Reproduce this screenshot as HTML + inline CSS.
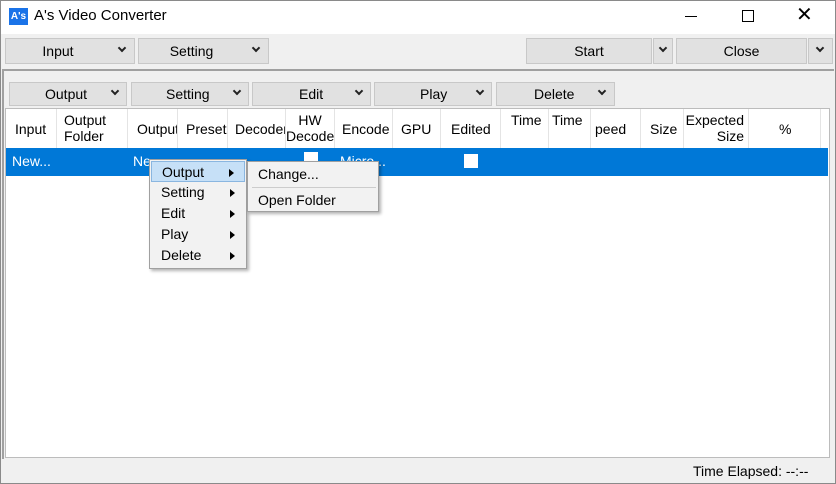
<!DOCTYPE html>
<html><head><style>
*{box-sizing:border-box;margin:0;padding:0}
body{width:836px;height:484px;overflow:hidden;background:#f0f0f0;font-family:"Segoe UI","Liberation Sans",sans-serif;font-size:14px;color:#000;position:relative}
.a{position:absolute}
.btn{position:absolute;background:#e1e1e1;border:1px solid #c8c8c8;display:flex;align-items:center;justify-content:center}
.chev{position:absolute;width:6px;height:6px;border-right:2px solid #222;border-bottom:2px solid #222;transform:rotate(45deg)}
.col{position:absolute;top:0;height:40px;border-right:1px solid #e4e4e4;font-size:14px;line-height:16px}
.mi{position:absolute;left:1px;width:94px;height:21px;padding-left:10px;line-height:21px}
.tri{position:absolute;right:10px;top:7px;width:0;height:0;border-left:5px solid #000;border-top:4px solid transparent;border-bottom:4px solid transparent}
</style></head><body>
<div class="a" style="left:0;top:0;width:836px;height:484px;border:1px solid #8a8a8a"></div>
<div class="a" style="left:1px;top:1px;width:834px;height:33px;background:#fff"></div>
<div class="a" style="left:9px;top:8px;width:19px;height:17px;background:#1a73e8;color:#fff;font-size:10px;font-weight:bold;line-height:17px;text-align:center">A's</div>
<div class="a" style="left:34px;top:7px;font-size:15px">A's Video Converter</div>
<div class="a" style="left:685px;top:16px;width:12px;height:1px;background:#000"></div>
<div class="a" style="left:742px;top:10px;width:12px;height:12px;border:1px solid #000"></div>
<div class="a" style="left:796px;top:5px;font-size:20px;line-height:20px">✕</div>

<div class="btn" style="left:5px;top:38px;width:106px;height:26px">Input</div><div class="btn" style="left:110px;top:38px;width:25px;height:26px;border-left:none"></div><div class="chev" style="left:119px;top:45px"></div>
<div class="btn" style="left:138px;top:38px;width:107px;height:26px">Setting</div><div class="btn" style="left:244px;top:38px;width:25px;height:26px;border-left:none"></div><div class="chev" style="left:253px;top:45px"></div>
<div class="btn" style="left:526px;top:38px;width:126px;height:26px">Start</div><div class="btn" style="left:653px;top:38px;width:20px;height:26px"></div><div class="chev" style="left:660px;top:45px"></div>
<div class="btn" style="left:676px;top:38px;width:131px;height:26px">Close</div><div class="btn" style="left:808px;top:38px;width:25px;height:26px"></div><div class="chev" style="left:817px;top:45px"></div>
<div class="a" style="left:2px;top:69px;width:832px;height:2px;background:#a0a0a0"></div>
<div class="a" style="left:2px;top:69px;width:2px;height:390px;background:#a0a0a0"></div>

<div class="btn" style="left:9px;top:82px;width:118px;height:24px;justify-content:flex-start;padding-left:35px">Output</div><div class="chev" style="left:112px;top:88px"></div>
<div class="btn" style="left:131px;top:82px;width:118px;height:24px;justify-content:flex-start;padding-left:34px">Setting</div><div class="chev" style="left:234px;top:88px"></div>
<div class="btn" style="left:252px;top:82px;width:119px;height:24px;justify-content:flex-start;padding-left:46px">Edit</div><div class="chev" style="left:356px;top:88px"></div>
<div class="btn" style="left:374px;top:82px;width:118px;height:24px;justify-content:flex-start;padding-left:45px">Play</div><div class="chev" style="left:477px;top:88px"></div>
<div class="btn" style="left:496px;top:82px;width:119px;height:24px;justify-content:flex-start;padding-left:37px">Delete</div><div class="chev" style="left:599px;top:88px"></div>

<div class="a" style="left:5px;top:108px;width:825px;height:350px;background:#fff;border:1px solid #bcbcbc"></div>
<div class="a" style="left:6px;top:109px;width:815px;height:40px">
<div class="col" style="left:0;width:51px;padding:12px 0 0 9px">Input</div>
<div class="col" style="left:51px;width:71px;padding:3px 0 0 7px">Output<br>Folder</div>
<div class="col" style="left:122px;width:50px;padding:12px 0 0 9px;overflow:hidden;white-space:nowrap">Output</div>
<div class="col" style="left:172px;width:50px;padding:12px 0 0 8px">Preset</div>
<div class="col" style="left:222px;width:58px;padding:12px 0 0 7px;overflow:hidden;white-space:nowrap">Decoder</div>
<div class="col" style="left:280px;width:49px;padding:3px 0 0 0;text-align:center;overflow:hidden;white-space:nowrap">HW<br>Decoder</div>
<div class="col" style="left:329px;width:58px;padding:12px 0 0 7px">Encode</div>
<div class="col" style="left:387px;width:48px;padding:12px 0 0 8px">GPU</div>
<div class="col" style="left:435px;width:60px;padding:12px 0 0 10px">Edited</div>
<div class="col" style="left:495px;width:48px;padding:3px 0 0 10px">Time</div>
<div class="col" style="left:543px;width:42px;padding:3px 0 0 3px">Time</div>
<div class="col" style="left:585px;width:50px;padding:12px 0 0 4px">peed</div>
<div class="col" style="left:635px;width:43px;padding:12px 0 0 9px">Size</div>
<div class="col" style="left:678px;width:65px;padding:3px 4px 0 0;text-align:right">Expected<br>Size</div>
<div class="col" style="left:743px;width:72px;padding:12px 0 0 30px">%</div>
</div>
<div class="a" style="left:6px;top:148px;width:822px;height:28px;background:#0078d7;color:#fff">
<div class="a" style="left:6px;top:5px">New...</div>
<div class="a" style="left:127px;top:5px">Ne</div>
<div class="a" style="left:298px;top:4px;width:14px;height:14px;background:#fff"></div>
<div class="a" style="left:334px;top:5px">Micro...</div>
<div class="a" style="left:458px;top:6px;width:14px;height:14px;background:#fff"></div>
</div>

<div class="a" style="left:149px;top:159px;width:98px;height:110px;background:#f2f2f2;border:1px solid #a0a0a0;box-shadow:2px 2px 3px rgba(0,0,0,.3)">
<div class="mi" style="top:1px;background:#c6e0f7;border:1px solid #8ab6e0">Output<span class="tri"></span></div>
<div class="mi" style="top:22px">Setting<span class="tri"></span></div>
<div class="mi" style="top:43px">Edit<span class="tri"></span></div>
<div class="mi" style="top:64px">Play<span class="tri"></span></div>
<div class="mi" style="top:85px">Delete<span class="tri"></span></div>
</div>
<div class="a" style="left:247px;top:161px;width:132px;height:51px;background:#f2f2f2;border:1px solid #a0a0a0;box-shadow:2px 2px 3px rgba(0,0,0,.3)">
<div class="a" style="left:10px;top:2px;line-height:20px">Change...</div>
<div class="a" style="left:4px;top:25px;width:124px;height:1px;background:#ccc"></div>
<div class="a" style="left:10px;top:28px;line-height:20px">Open Folder</div>
</div>

<div class="a" style="left:693px;top:463px">Time Elapsed: --:--</div>
</body></html>
